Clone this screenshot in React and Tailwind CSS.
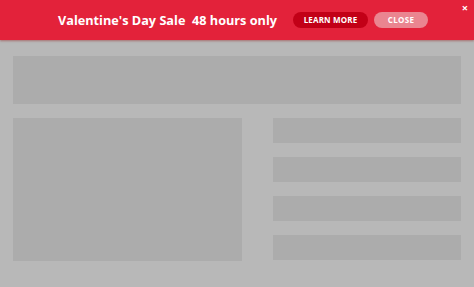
export default function App() {
  return (
    <div className="relative w-[474px] h-[287px] bg-[#b8b8b8] overflow-hidden font-['Open_Sans',sans-serif]">
      {/* promo banner */}
      <div className="relative h-[40px] bg-[#e3223a] flex items-center pl-[58px] shadow-[0_1px_2px_rgba(150,40,40,0.5)]">
        <span className="text-white font-bold text-[12.7px] leading-none whitespace-pre">Valentine's Day Sale  48 hours only</span>
        <button className="ml-[16px] w-[75px] h-[16px] rounded-full bg-[#c20017] text-white text-[8px] font-bold leading-none tracking-[0.02em]">
          LEARN MORE
        </button>
        <button className="ml-[6px] w-[54px] h-[16px] rounded-full bg-[#ea8590] text-white text-[8px] font-bold leading-none tracking-[0.04em]">
          CLOSE
        </button>
        <span className="absolute right-[6px] top-[2px] text-white text-[11px] font-bold leading-none">×</span>
      </div>

      {/* page skeleton */}
      <div className="pl-[13px] pr-[13px] pt-[16px]">
        <div className="h-[48px] bg-[#acacac]" />
        <div className="mt-[14px] flex gap-[31px]">
          <div className="w-[229px] h-[143px] bg-[#acacac]" />
          <div className="flex-1 flex flex-col gap-[14px]">
            <div className="h-[25px] bg-[#acacac]" />
            <div className="h-[25px] bg-[#acacac]" />
            <div className="h-[25px] bg-[#acacac]" />
            <div className="h-[25px] bg-[#acacac]" />
          </div>
        </div>
      </div>
    </div>
  )
}
